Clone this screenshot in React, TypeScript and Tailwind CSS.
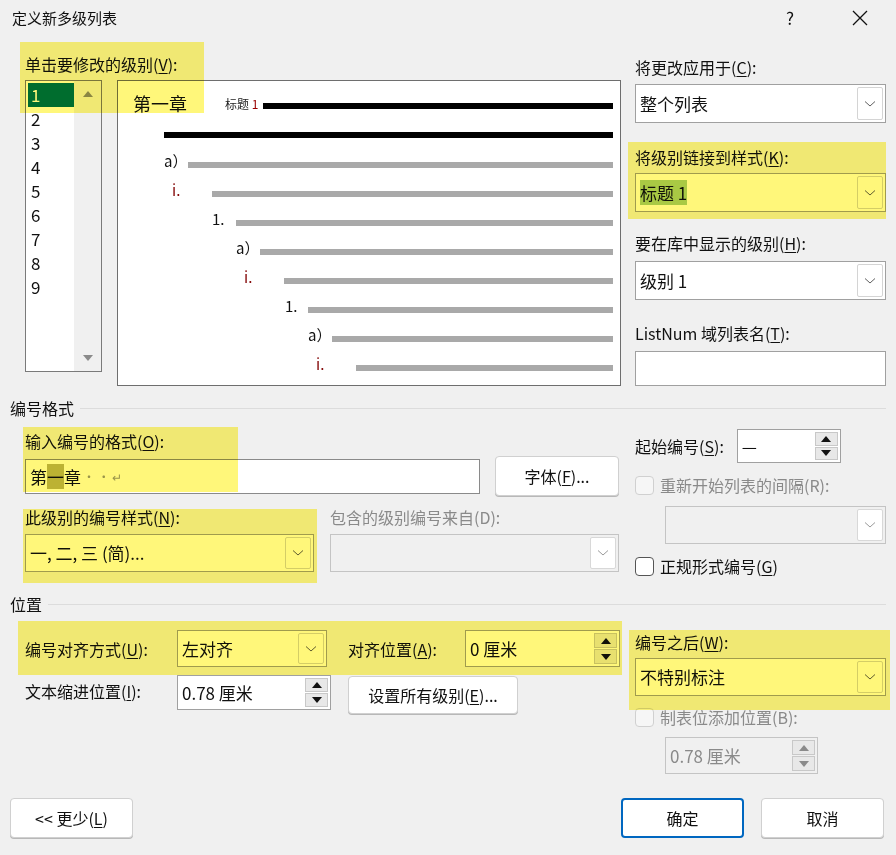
import React from "react";

const font = { fontFamily: '"Noto Sans CJK SC", "Noto Sans", sans-serif' };

function Chevron({ dim }: { dim?: boolean }) {
  return (
    <svg width="12" height="8" viewBox="0 0 12 8">
      <path d="M1 1.5 L6 6 L11 1.5" fill="none" stroke={dim ? "#9a9a9a" : "#606060"} strokeWidth="1" />
    </svg>
  );
}

function Combo({ text, w, h = 38, disabled, children }: { text?: string; w: number; h?: number; disabled?: boolean; children?: React.ReactNode }) {
  return (
    <div
      className={`flex items-center border ${disabled ? "border-[#c4c4c4] bg-[#f0f0f0]" : "border-[#a0a0a0] bg-white"}`}
      style={{ width: w, height: h }}
    >
      <div className="flex-1 px-[4px] text-[17px] text-[#111] whitespace-nowrap overflow-hidden">{children ?? text}</div>
      <div className={`flex h-[calc(100%-4px)] w-[26px] mr-[2px] items-center justify-center rounded-[2px] border ${disabled ? "border-[#d8d8d8] bg-white" : "border-[#d4d4d4] bg-white"}`}>
        <Chevron dim={disabled} />
      </div>
    </div>
  );
}

function Tri({ up, dim }: { up?: boolean; dim?: boolean }) {
  return (
    <svg width="10" height="6" viewBox="0 0 10 6">
      <path d={up ? "M0 6 L5 0 L10 6 Z" : "M0 0 L5 6 L10 0 Z"} fill={dim ? "#8a8a8a" : "#111"} />
    </svg>
  );
}

function Spin({ text, w, h = 35, disabled }: { text: string; w: number; h?: number; disabled?: boolean }) {
  return (
    <div
      className={`flex items-stretch border ${disabled ? "border-[#c4c4c4] bg-[#f0f0f0] text-[#8a8a8a]" : "border-[#a0a0a0] bg-white text-[#111]"}`}
      style={{ width: w, height: h }}
    >
      <div className="flex flex-1 items-center px-[4px] text-[17px] whitespace-nowrap">{text}</div>
      <div className="flex w-[25px] flex-col gap-[1px] py-[2px] pr-[2px]">
        <div className="flex flex-1 items-center justify-center border border-[#c8c8c8] bg-[#e8e8e8]"><Tri up dim={disabled} /></div>
        <div className="flex flex-1 items-center justify-center border border-[#c8c8c8] bg-[#e8e8e8]"><Tri dim={disabled} /></div>
      </div>
    </div>
  );
}

function Btn({ children, w, h = 40, primary }: { children: React.ReactNode; w: number; h?: number; primary?: boolean }) {
  return (
    <div
      className={`flex items-center justify-center rounded-[4px] bg-white text-[16px] text-[#111] ${primary ? "border-2 border-[#0067c0]" : "border border-[#d0d0d0] shadow-[0_1px_0_#b8b8b8]"}`}
      style={{ width: w, height: h }}
    >
      {children}
    </div>
  );
}

function Check({ label, disabled }: { label: React.ReactNode; disabled?: boolean }) {
  return (
    <div className={`flex items-center gap-[6px] text-[16px] ${disabled ? "text-[#8a8a8a]" : "text-[#111]"}`}>
      <div className={`h-[19px] w-[19px] rounded-[4px] border ${disabled ? "border-[#d0d0d0] bg-[#f6f6f6]" : "border-[#555] bg-white"}`} />
      <span>{label}</span>
    </div>
  );
}

const U = ({ c }: { c: string }) => <span className="underline underline-offset-2">{c}</span>;

function Section({ title }: { title: string }) {
  return (
    <div className="flex items-center gap-[6px] pl-[10px] pr-[10px] text-[16px] text-[#111]">
      <span>{title}</span>
      <div className="h-px flex-1 bg-[#dcdcdc]" />
    </div>
  );
}

const previewRows = [
  { lbl: "a）", lx: 164, bx: 188, red: false },
  { lbl: "i.", lx: 172, bx: 212, red: true },
  { lbl: "1.", lx: 212, bx: 236, red: false },
  { lbl: "a）", lx: 236, bx: 260, red: false },
  { lbl: "i.", lx: 244, bx: 284, red: true },
  { lbl: "1.", lx: 285, bx: 308, red: false },
  { lbl: "a）", lx: 308, bx: 332, red: false },
  { lbl: "i.", lx: 316, bx: 356, red: true },
];

function Preview() {
  return (
    <div className="h-[306px] w-[504px] border border-[#6e6e6e] bg-white pt-[8px]">
      <div className="flex h-[29px] items-center">
        <span className="ml-[15px] w-[92px] text-[18px] text-[#111]">第一章</span>
        <span className="text-[12px] text-[#222]">标题 <span className="text-[#900]">1</span></span>
        <div className="ml-[5px] mr-[7px] mt-[4px] h-[6px] flex-1 bg-black" />
      </div>
      <div className="flex h-[29px] items-center">
        <div className="ml-[46px] mr-[7px] mt-[4px] h-[6px] flex-1 bg-black" />
      </div>
      {previewRows.map((r, i) => (
        <div key={i} className="flex h-[29px] items-center">
          <span
            className={`text-[15px] ${r.red ? "text-[#800000]" : "text-[#111]"}`}
            style={{ marginLeft: r.lx - 118, width: r.bx - r.lx }}
          >
            {r.lbl}
          </span>
          <div className="mr-[7px] mt-[6px] h-[6px] flex-1 bg-[#a9a9a9]" />
        </div>
      ))}
    </div>
  );
}

function LevelList() {
  return (
    <div className="flex h-[292px] w-[77px] border border-[#7a7a7a] bg-white">
      <div className="w-[48px] pl-[2px] pt-[2px]">
        {[1, 2, 3, 4, 5, 6, 7, 8, 9].map((n) => (
          <div key={n} className={`h-[24px] pl-[3px] text-[17px] leading-[24px] ${n === 1 ? "bg-[#007060] text-white" : "text-[#111]"}`}>
            {n}
          </div>
        ))}
      </div>
      <div className="flex flex-1 flex-col items-center justify-between bg-[#f0f0f0] py-[10px]">
        <Tri up dim />
        <Tri dim />
      </div>
    </div>
  );
}

function Hl({ x, y, w, h }: { x: number; y: number; w: number; h: number }) {
  return <div className="pointer-events-none absolute bg-[#fff77a] mix-blend-multiply" style={{ left: x, top: y, width: w, height: h }} />;
}

export default function App() {
  return (
    <div className="relative h-[855px] w-[896px] overflow-hidden bg-[#f0f0f0] text-[#111]" style={font}>
      {/* title bar */}
      <div className="flex h-[36px] items-center pl-[12px] text-[15px]">
        <span className="flex-1">定义新多级列表</span>
        <span className="mr-[58px] text-[17px]">?</span>
        <svg width="16" height="16" viewBox="0 0 16 16" className="mr-[28px]">
          <path d="M1 1 L15 15 M15 1 L1 15" stroke="#111" strokeWidth="1.3" />
        </svg>
      </div>

      {/* top */}
      <div className="mt-[18px] flex pl-[25px]">
        <div className="w-[610px]">
          <div className="h-[20px] text-[16px] leading-[20px]">单击要修改的级别(<U c="V" />):</div>
          <div className="mt-[6px] flex gap-[15px]">
            <LevelList />
            <Preview />
          </div>
        </div>
        <div className="w-[252px] pt-[3px]">
          <div className="h-[20px] text-[16px] leading-[20px]">将更改应用于(<U c="C" />):</div>
          <div className="mt-[7px]"><Combo text="整个列表" w={251} h={39} /></div>
          <div className="mt-[24px] h-[20px] text-[16px] leading-[20px]">将级别链接到样式(<U c="K" />):</div>
          <div className="mt-[6px]">
            <Combo w={251} h={39}><span className="bg-[#a9d08e]">标题 1</span></Combo>
          </div>
          <div className="mt-[21px] h-[20px] text-[16px] leading-[20px]">要在库中显示的级别(<U c="H" />):</div>
          <div className="mt-[8px]"><Combo text="级别 1" w={251} h={39} /></div>
          <div className="mt-[23px] h-[20px] text-[16px] leading-[20px]">ListNum 域列表名(<U c="T" />):</div>
          <div className="mt-[8px] h-[35px] w-[251px] border border-[#a0a0a0] bg-white" />
        </div>
      </div>

      {/* 编号格式 */}
      <div className="mt-[10px]"><Section title="编号格式" /></div>
      <div className="flex pl-[25px]">
        <div className="w-[610px]">
          <div className="mt-[11px] h-[20px] text-[16px] leading-[20px]">输入编号的格式(<U c="O" />):</div>
          <div className="mt-[5px] flex items-start gap-[15px]">
            <div className="mt-[3px] flex h-[35px] w-[455px] items-center border border-[#8a8a8a] bg-white px-[4px] text-[17px]">
              第<span className="bg-[#bcb86a]">一</span>章<span className="ml-[2px] text-[12px] text-[#999]">· · ↵</span>
            </div>
            <Btn w={124}>字体(<U c="F" />)...</Btn>
          </div>
          <div className="mt-[11px] flex gap-[16px] text-[16px] leading-[20px]">
            <div className="w-[289px]">此级别的编号样式(<U c="N" />):</div>
            <div className="text-[#8a8a8a]">包含的级别编号来自(D):</div>
          </div>
          <div className="mt-[7px] flex gap-[16px]">
            <Combo text="一, 二, 三 (简)..." w={289} />
            <Combo w={289} disabled />
          </div>
        </div>
        <div className="w-[252px]">
          <div className="mt-[9px] flex items-center gap-[13px] text-[16px]">
            <span>起始编号(<U c="S" />):</span>
            <Spin text="—" w={104} h={34} />
          </div>
          <div className="mt-[10px]"><Check disabled label="重新开始列表的间隔(R):" /></div>
          <div className="mt-[9px] ml-[30px]"><Combo w={221} disabled /></div>
          <div className="mt-[10px]"><Check label={<>正规形式编号(<U c="G" />)</>} /></div>
        </div>
      </div>

      {/* 位置 */}
      <div className="mt-[14px]"><Section title="位置" /></div>
      <div className="flex pl-[25px]">
        <div className="w-[610px]">
          <div className="mt-[14px] flex items-center text-[16px]">
            <span className="w-[152px]">编号对齐方式(<U c="U" />):</span>
            <Combo text="左对齐" w={150} h={37} />
            <span className="ml-[21px] w-[117px]">对齐位置(<U c="A" />):</span>
            <Spin text="0 厘米" w={155} h={37} />
          </div>
          <div className="mt-[8px] flex items-start text-[16px]">
            <span className="w-[152px] pt-[4px]">文本缩进位置(<U c="I" />):</span>
            <Spin text="0.78 厘米" w={154} />
            <div className="ml-[17px] mt-[1px]"><Btn w={170} h={38}>设置所有级别(<U c="E" />)...</Btn></div>
          </div>
        </div>
        <div className="w-[252px]">
          <div className="mt-[16px] h-[20px] text-[16px] leading-[20px]">编号之后(<U c="W" />):</div>
          <div className="mt-[6px]"><Combo text="不特别标注" w={251} /></div>
          <div className="mt-[9px]"><Check disabled label="制表位添加位置(B):" /></div>
          <div className="mt-[8px] ml-[30px]"><Spin text="0.78 厘米" w={153} h={37} disabled /></div>
        </div>
      </div>

      {/* bottom */}
      <div className="mt-[24px] flex items-center pl-[10px]">
        <Btn w={123}>&lt;&lt; 更少(<U c="L" />)</Btn>
        <div className="ml-[488px]"><Btn w={123} primary>确定</Btn></div>
        <div className="ml-[17px]"><Btn w={123}>取消</Btn></div>
      </div>

      {/* highlights */}
      <Hl x={20} y={42} w={184} h={71} />
      <Hl x={628} y={142} w={258} h={77} />
      <Hl x={23} y={427} w={215} h={65} />
      <Hl x={23} y={509} w={294} h={74} />
      <Hl x={18} y={621} w={604} h={54} />
      <Hl x={629} y={630} w={261} h={80} />
    </div>
  );
}
